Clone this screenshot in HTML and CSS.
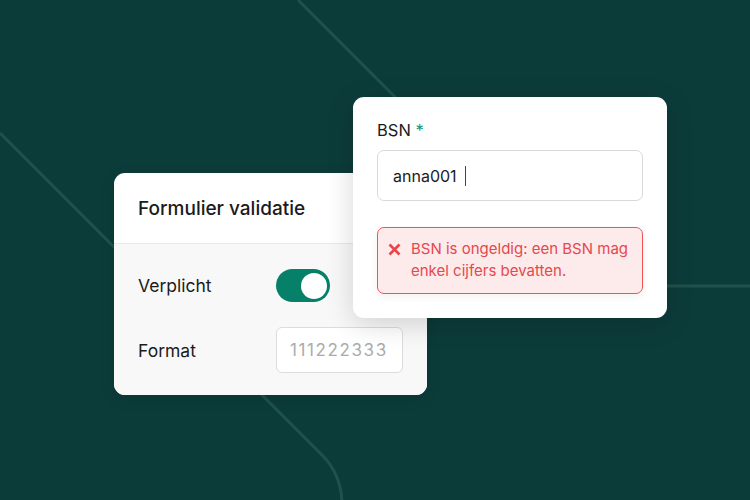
FILE: index.html
```html
<!DOCTYPE html>
<html lang="nl">
<head>
    <meta charset="UTF-8">
    <meta name="viewport" content="width=device-width, initial-scale=1.0">
    <title>Formulier validatie</title>
    <link rel="stylesheet" href="styles.css">
</head>
<body>
    <div class="stage">
        <!-- achtergrond lijnen -->
        <svg class="lines" width="750" height="500" viewBox="0 0 750 500">
            <path d="M0 133 L322 455 Q342 475 342 505" />
            <path d="M298 0 L560 262 Q584 286 618 286 L760 286" />
        </svg>

        <div class="scene">
            <!-- instellingen kaart -->
            <div class="card settings">
                <div class="settings-head">Formulier validatie</div>
                <div class="settings-body">
                    <div class="row">
                        <span class="row-label">Verplicht</span>
                        <span class="toggle"><span class="knob"></span></span>
                    </div>
                    <div class="row">
                        <span class="row-label">Format</span>
                        <span class="format-input">111222333</span>
                    </div>
                </div>
            </div>

            <!-- veld met foutmelding -->
            <div class="card field">
                <label class="field-label">BSN <span class="req">*</span></label>
                <div class="text-input">anna001<span class="caret"></span></div>
                <div class="error">
                    <svg class="error-icon" width="13" height="13" viewBox="0 0 13 13">
                        <path d="M1.5 1.5 L11.5 11.5 M11.5 1.5 L1.5 11.5" />
                    </svg>
                    <span>BSN is ongeldig: een BSN mag enkel cijfers bevatten.</span>
                </div>
            </div>
        </div>
    </div>
</body>
</html>
```

FILE: styles.css
```css
body {
    margin: 0;
    font-family: Inter, "Noto Sans", sans-serif;
    background-color: #0c3c3a;
    color: #1b1b1b;
}
.stage {
    display: grid;
    width: 750px;
    height: 500px;
    overflow: hidden;
    background-color: #0c3c3a;
}
.lines,
.scene {
    grid-area: 1 / 1;
}
.lines path {
    fill: none;
    stroke: #1f524c;
    stroke-width: 3;
}
.scene {
    display: grid;
    grid-template-columns: 239px 74px 240px;
    grid-template-rows: 76px 145px 77px;
    padding: 97px 0 0 114px;
    align-content: start;
}
.card {
    background-color: white;
    border-radius: 11px;
    overflow: hidden;
}
.settings {
    grid-column: 1 / 3;
    grid-row: 2 / 4;
    display: flex;
    flex-direction: column;
    box-shadow: 0 4px 14px rgba(0, 0, 0, 0.12);
}
.settings-head {
    height: 70px;
    padding: 0 24px;
    display: flex;
    align-items: center;
    font-size: 19px;
    font-weight: 500;
    border-bottom: 1px solid #e9e9e9;
}
.settings-body {
    flex: 1;
    background-color: #f8f8f8;
    padding: 25px 24px 0;
    display: flex;
    flex-direction: column;
    gap: 25px;
}
.row {
    display: grid;
    grid-template-columns: 138px 1fr;
    align-items: center;
    font-size: 17.5px;
}
.toggle {
    width: 54px;
    height: 33px;
    border-radius: 17px;
    background-color: #07806a;
    display: flex;
    align-items: center;
    justify-content: flex-end;
    padding-right: 3px;
    box-sizing: border-box;
}
.knob {
    width: 26px;
    height: 26px;
    border-radius: 50%;
    background-color: white;
}
.format-input {
    height: 46px;
    border: 1px solid #dcdcdc;
    border-radius: 6px;
    background-color: white;
    display: flex;
    align-items: center;
    padding-left: 13px;
    box-sizing: border-box;
    color: #ababab;
    font-size: 17px;
    letter-spacing: 1.6px;
}
.field {
    grid-column: 2 / 4;
    grid-row: 1 / 3;
    z-index: 1;
    padding: 21px 24px 0;
    box-shadow: 0 6px 28px rgba(0, 0, 0, 0.16);
}
.field-label {
    display: block;
    font-size: 16.5px;
    line-height: 24px;
    margin-bottom: 8px;
}
.req {
    color: #109a78;
}
.text-input {
    height: 51px;
    border: 1px solid #d9d9d9;
    border-radius: 7px;
    display: flex;
    align-items: center;
    padding-left: 15px;
    box-sizing: border-box;
    font-size: 16px;
}
.caret {
    width: 1.5px;
    height: 20px;
    margin-left: 8px;
    background-color: #444;
}
.error {
    margin-top: 26px;
    height: 67px;
    box-sizing: border-box;
    border: 1.5px solid #ef5358;
    border-radius: 7px;
    background-color: #fdeaeb;
    color: #e5484d;
    font-size: 15px;
    line-height: 22px;
    padding: 10px 10px 0;
    display: flex;
    gap: 10px;
    box-shadow: 0 3px 8px rgba(0, 0, 0, 0.06);
}
.error-icon {
    flex: none;
    margin-top: 5px;
}
.error-icon path {
    stroke: #e8464b;
    stroke-width: 2.6;
    fill: none;
}
```
